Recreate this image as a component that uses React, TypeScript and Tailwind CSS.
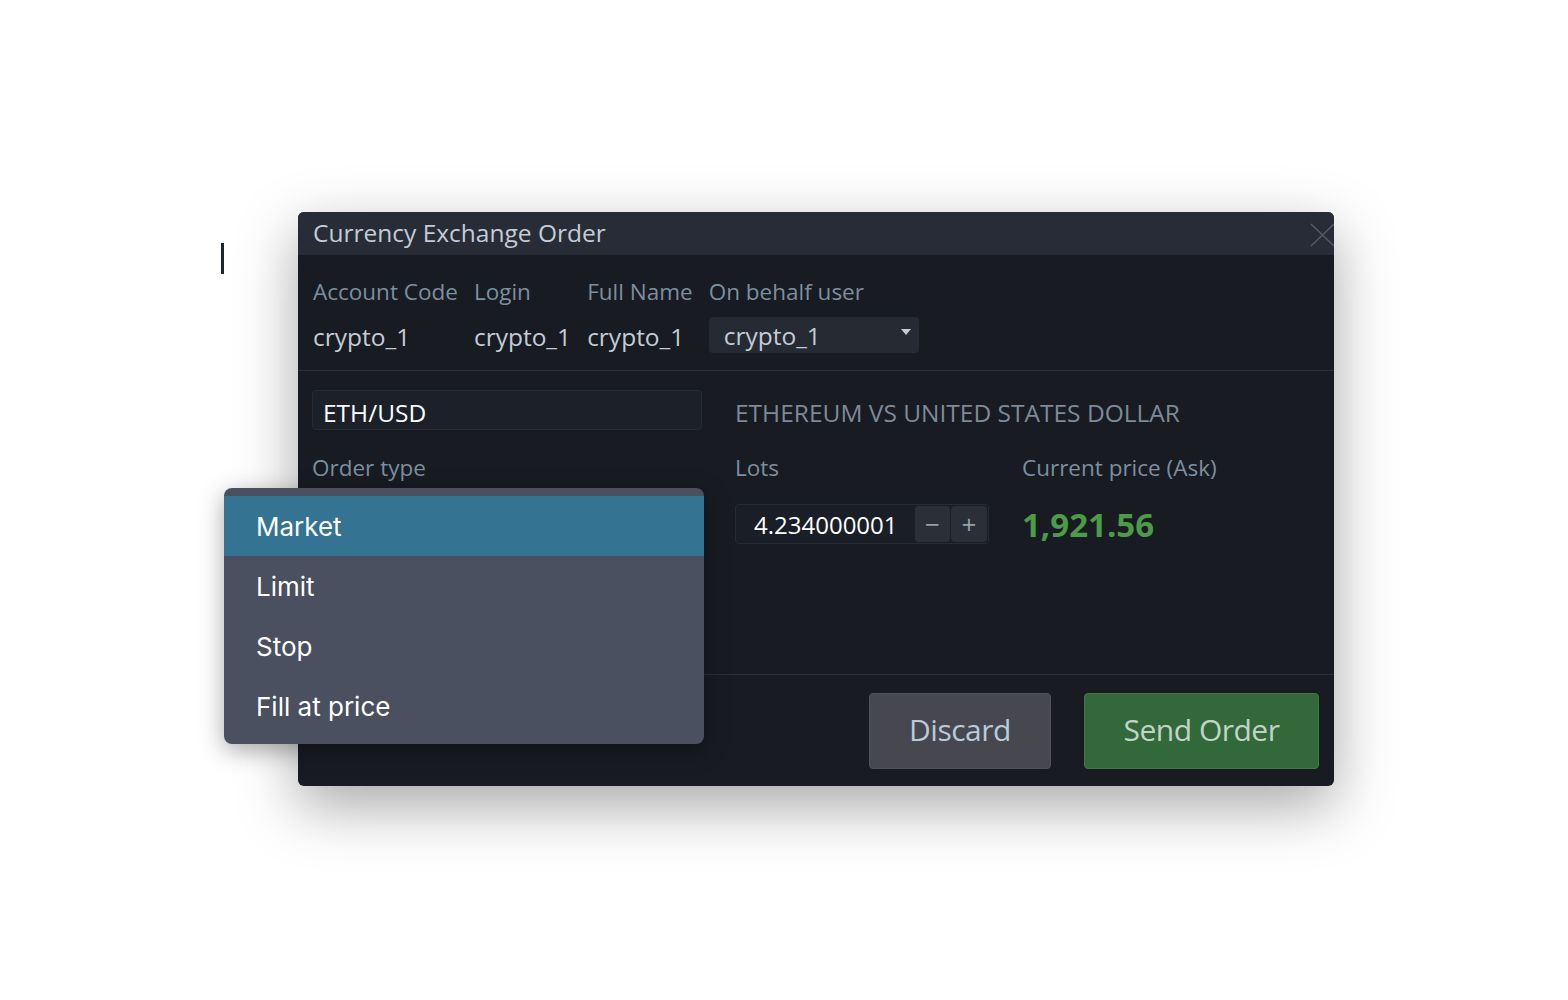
const users = [
  { label: "Account Code", value: "crypto_1" },
  { label: "Login", value: "crypto_1" },
  { label: "Full Name", value: "crypto_1" },
];

const orderTypes = ["Market", "Limit", "Stop", "Fill at price"];

export default function App() {
  return (
    <div className="relative min-h-[1000px] w-full bg-white pl-[298px] pt-[212px] font-['Open_Sans',sans-serif]">
      {/* text caret */}
      <div className="absolute left-[221px] top-[243px] h-[31px] w-[3px] bg-[#1e2630]" />

      <div className="relative flex w-[1036px] flex-col rounded-md bg-[#181b22] shadow-[0_20px_60px_rgba(0,0,0,0.35)]">
        {/* header */}
        <div className="flex h-[43px] items-center justify-between overflow-hidden rounded-t-md bg-[#282c36] pl-[15px]">
          <span className="text-[24.5px] leading-none text-[#c3ccd6]">Currency Exchange Order</span>
          <svg width="26" height="24" viewBox="0 0 26 24" className="mr-[-2px] mt-[2px]">
            <path d="M1 1 L24 23 M24 1 L1 23" stroke="#565c67" strokeWidth="1.3" fill="none" />
          </svg>
        </div>

        {/* account info */}
        <div className="flex gap-4 border-b border-[#2a2f38] px-[15px] pb-[17px] pt-[22px]">
          {users.map((u) => (
            <div key={u.label} className="flex flex-col">
              <span className="text-[22.5px] leading-[30px] text-[#7b8fa1]">{u.label}</span>
              <span className="mt-[14px] text-[24.5px] leading-[32px] text-[#c3ccd6]">{u.value}</span>
            </div>
          ))}
          <div className="flex flex-col">
            <span className="text-[22.5px] leading-[30px] text-[#7b8fa1]">On behalf user</span>
            <div className="mt-[10px] flex h-[36px] w-[210px] items-center justify-between rounded-sm bg-[#262a33] pl-[15px] pr-[8px]">
              <span className="pt-[2px] text-[24.5px] leading-none text-[#c3ccd6]">crypto_1</span>
              <span className="mb-[6px] h-0 w-0 border-x-[5px] border-t-[6px] border-x-transparent border-t-[#c3ccd6]" />
            </div>
          </div>
        </div>

        {/* instrument */}
        <div className="flex h-[304px] gap-[33px] border-b border-[#2a2f38] px-[14px] pt-[19px]">
          <div className="flex w-[390px] flex-col">
            <div className="flex h-[40px] items-center rounded-sm border border-[#262b34] bg-[#1c2029] px-[10px]">
              <span className="pt-[6px] text-[24.5px] leading-none text-white">ETH/USD</span>
            </div>
            <span className="mt-[23px] text-[22.5px] leading-[30px] text-[#7b8fa1]">Order type</span>
          </div>
          <div className="flex flex-1 flex-col">
            <div className="flex h-[40px] items-center">
              <span className="pt-[6px] text-[24.5px] leading-none text-[#7d8a99]">ETHEREUM VS UNITED STATES DOLLAR</span>
            </div>
            <div className="mt-[23px] flex gap-[33px]">
              <div className="flex w-[254px] flex-col">
                <span className="text-[22.5px] leading-[30px] text-[#7b8fa1]">Lots</span>
                <div className="mt-[21px] flex h-[40px] items-center rounded-sm border border-[#262b34] bg-[#1a1e26] pl-[18px] pr-[1px]">
                  <span className="flex-1 pt-[2px] text-[24px] leading-none text-white">4.234000001</span>
                  <div className="flex gap-[1px]">
                    <button className="flex h-[36px] w-[35px] items-center justify-center rounded-sm bg-[#2a2f38] text-[26px] leading-none text-[#95a0ad]">−</button>
                    <button className="flex h-[36px] w-[36px] items-center justify-center rounded-sm bg-[#2a2f38] text-[26px] leading-none text-[#95a0ad]">+</button>
                  </div>
                </div>
              </div>
              <div className="flex flex-col">
                <span className="text-[22.5px] leading-[30px] text-[#7b8fa1]">Current price (Ask)</span>
                <span className="mt-[21px] flex h-[40px] items-center text-[33px] font-bold leading-none text-[#4b9b47]">1,921.56</span>
              </div>
            </div>
          </div>
        </div>

        {/* footer */}
        <div className="flex justify-end gap-[33px] px-[15px] pb-[17px] pt-[18px]">
          <button className="h-[76px] w-[182px] rounded-sm border border-[#52525a] bg-[#47474f] pb-[3px] text-[30px] tracking-[-0.5px] text-[#b9cad9]">Discard</button>
          <button className="h-[76px] w-[235px] rounded-sm border border-[#3c7a42] bg-[#33693a] pb-[3px] text-[30px] tracking-[-0.5px] text-[#c1d4c6]">Send Order</button>
        </div>

        {/* order type dropdown */}
        <div className="absolute left-[-74px] top-[276px] flex w-[480px] flex-col rounded-lg bg-[#4a5060] py-[8px] font-['Inter',sans-serif] shadow-[0_6px_24px_rgba(0,0,0,0.35)]">
          {orderTypes.map((t, i) => (
            <div
              key={t}
              className={`flex h-[60px] items-center pl-[32px] text-[26px] text-white ${i === 0 ? "bg-[#347392]" : ""}`}
            >
              {t}
            </div>
          ))}
        </div>
      </div>
    </div>
  );
}
